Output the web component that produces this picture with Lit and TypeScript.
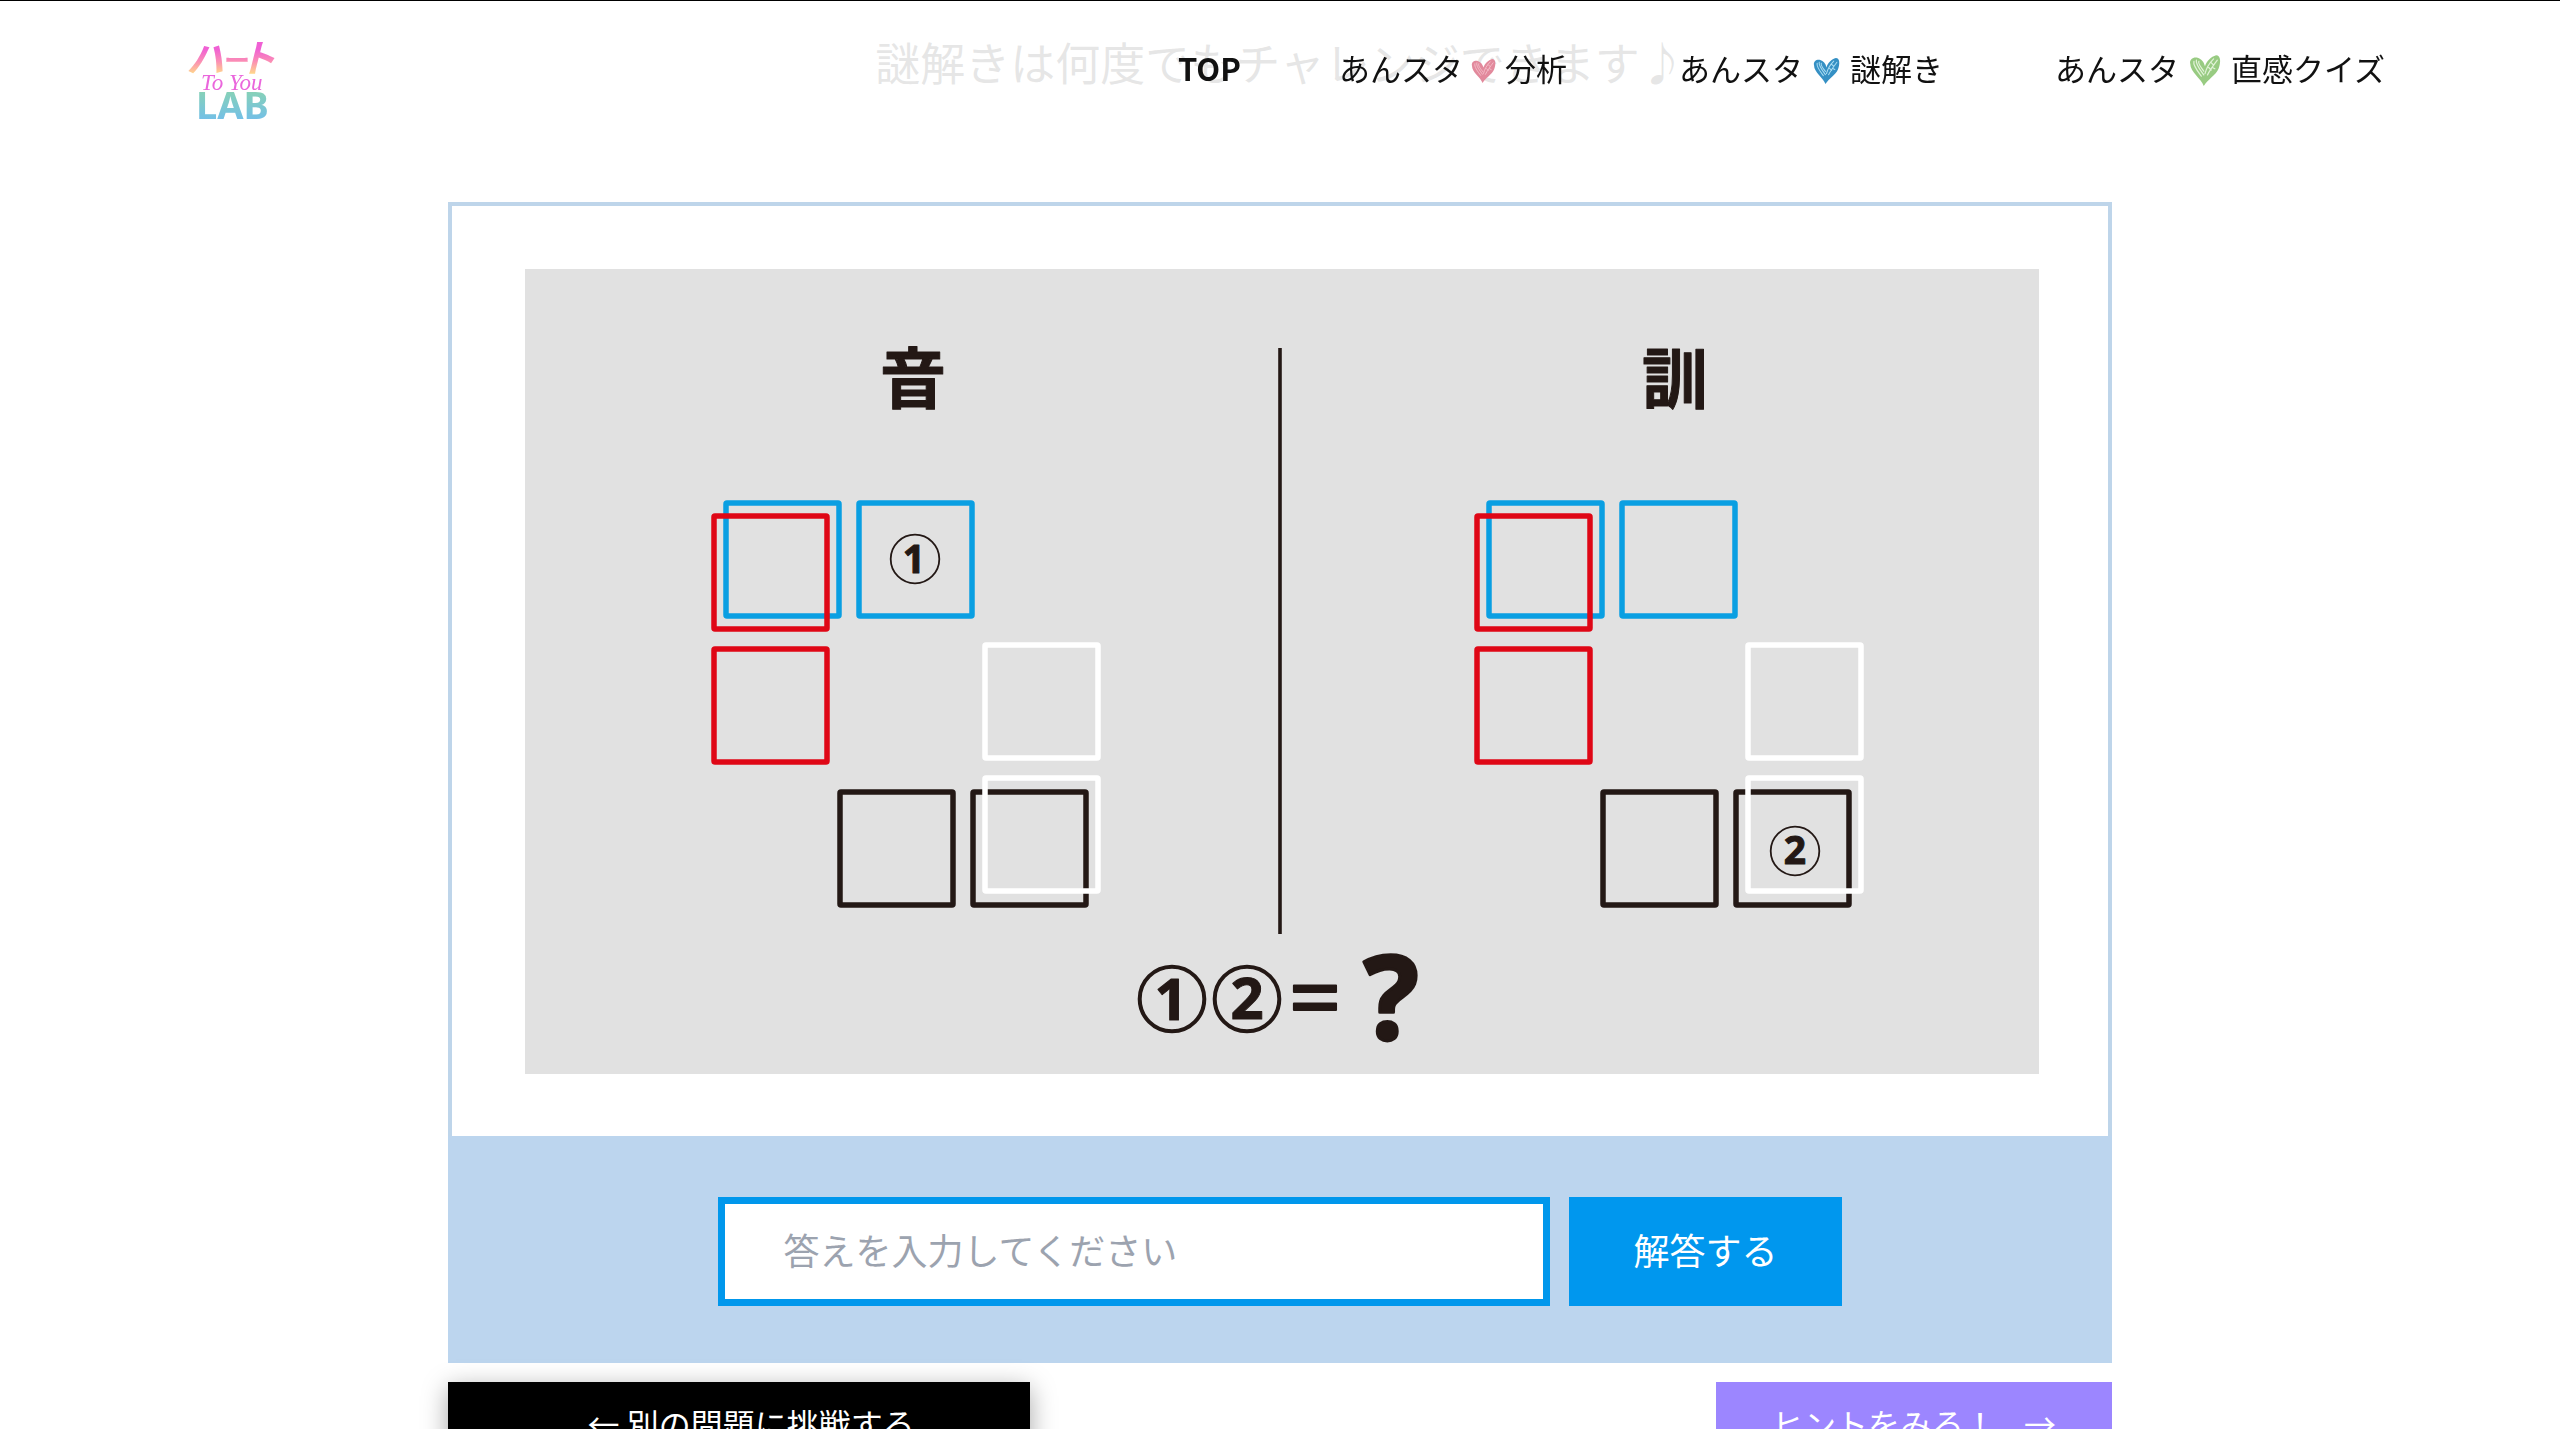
import { LitElement, html, svg, css } from "lit";
import { customElement, property, state } from "lit/decorators.js";

const HEART = {
  outline: "M12 26 C10 20 1 15 1 8 C0 4 4 2 7 3 C10 4 12 6 13 10 C14 6 18 2 22 1 C26 1 26 7 24 12 C22 17 15 21 12 26 Z",
  hatch:
    "M4 6 C3 9 7 14 10 18 M6 5 C5 8 9 13 12 17 M8 6 C7 8 10 11 12 14 M20 4 C16 8 14 12 13 16 M23 5 C20 9 17 13 15 17 M18 7 L20 9 M16 11 L18 13 M19 11 L21 12",
};

@customElement("sketch-heart")
export class SketchHeart extends LitElement {
  static styles = css`
    :host { display: inline-flex; justify-content: center; }
    svg { display: block; height: auto; overflow: visible; }
  `;
  @property() color = "#e2899c";
  @property() line = "#f3bcc8";
  @property({ type: Number }) size = 25;

  render() {
    return html`<svg width=${this.size} viewBox="0 0 26 27" aria-hidden="true">
      <path d=${HEART.outline} fill=${this.color}></path>
      <path d=${HEART.hatch} fill="none" stroke=${this.line} stroke-width="1" stroke-linecap="round"></path>
    </svg>`;
  }
}

@customElement("site-logo")
export class SiteLogo extends LitElement {
  static styles = css`
    :host { display: block; }
    svg { display: block; overflow: visible; }
    .kana { font: italic 700 38px "Noto Sans CJK JP", sans-serif; }
    .dash { font: 700 26px "Noto Sans CJK JP", sans-serif; }
    .script { font: italic 400 23px "Liberation Serif", serif; }
    .lab { font: 700 38px "Noto Sans", sans-serif; }
  `;
  render() {
    return html`<svg width="88" height="84" viewBox="0 0 88 84" role="img" aria-label="ハート To You LAB">
      <defs>
        <linearGradient id="kana" gradientUnits="userSpaceOnUse" x1="0" y1="4" x2="0" y2="35">
          <stop offset="0.2" stop-color="#f060d4"></stop>
          <stop offset="0.6" stop-color="#fb8fb4"></stop>
          <stop offset="1" stop-color="#ffd98a"></stop>
        </linearGradient>
        <linearGradient id="lab" gradientUnits="userSpaceOnUse" x1="0" y1="53" x2="0" y2="80">
          <stop offset="0" stop-color="#86d1b8"></stop>
          <stop offset="1" stop-color="#74c0e6"></stop>
        </linearGradient>
      </defs>
      <text class="lab" x="10" y="80" fill="url(#lab)">LAB</text>
      <g fill="url(#kana)">
        <text class="kana" x="0" y="34">ハ</text>
        <text class="dash" x="38" y="31">ー</text>
        <text class="kana" x="52" y="33">ト</text>
      </g>
      <text class="script" x="15" y="51" fill="#ea66dc">To You</text>
    </svg>`;
  }
}

type Box = { x: number; y: number; color: string };

const BLUE = "#0a9fe2";
const RED = "#df0716";
const INK = "#231815";
const WHITE = "#ffffff";

const BOXES: Box[] = [
  { x: 201, y: 234, color: BLUE },
  { x: 334, y: 234, color: BLUE },
  { x: 189, y: 247, color: RED },
  { x: 189, y: 380, color: RED },
  { x: 315, y: 523, color: INK },
  { x: 448, y: 523, color: INK },
  { x: 460, y: 376, color: WHITE },
  { x: 460, y: 509, color: WHITE },
];

@customElement("puzzle-figure")
export class PuzzleFigure extends LitElement {
  static styles = css`
    :host { display: block; }
    svg { display: block; width: 100%; height: auto; background: #e1e1e1; }
    text { fill: #231815; stroke: #231815; stroke-linejoin: round; text-anchor: middle; font-weight: 700; }
    .title { font-family: "Noto Sans CJK JP", sans-serif; font-size: 66px; stroke-width: 1px; }
    .digit { font-family: "Noto Sans", sans-serif; font-size: 39px; stroke-width: 1px; }
    .large { font-family: "Noto Sans", sans-serif; font-size: 58px; stroke-width: 1px; }
    .equals { font-family: "Noto Sans", sans-serif; font-size: 92px; font-weight: 400; stroke-width: 2px; }
    .mark { font-family: "Noto Sans", sans-serif; font-size: 116px; stroke-width: 3px; }
  `;

  private group(dx: number) {
    return svg`<g transform=${`translate(${dx} 0)`}>
      ${BOXES.map((b) => svg`<rect x=${b.x} y=${b.y} width="113" height="113" rx="1"
        fill="none" stroke=${b.color} stroke-width="5.5" stroke-linejoin="round"></rect>`)}
    </g>`;
  }

  render() {
    return html`<svg viewBox="0 0 1514 805" role="img" aria-label="音と訓の謎解き問題">
      <text class="title" x="388" y="134">音</text>
      <text class="title" x="1150" y="134">訓</text>
      <line x1="755" y1="79" x2="755" y2="665" stroke=${INK} stroke-width="3.6"></line>
      ${this.group(0)}
      ${this.group(763)}
      <g fill="none" stroke=${INK}>
        <circle cx="390" cy="290" r="24.3" stroke-width="1.8"></circle>
        <circle cx="1270" cy="582" r="24.3" stroke-width="1.8"></circle>
        <circle cx="647" cy="730" r="32.3" stroke-width="4"></circle>
        <circle cx="722" cy="730" r="32.3" stroke-width="4"></circle>
      </g>
      <text class="digit" x="389" y="304">1</text>
      <text class="digit" x="1270" y="595">2</text>
      <text class="large" x="646" y="751">1</text>
      <text class="large" x="722" y="750">2</text>
      <text class="equals" x="790" y="761">=</text>
      <text class="mark" x="866" y="770">?</text>
    </svg>`;
  }
}

@customElement("app-root")
export class AppRoot extends LitElement {
  static styles = css`
    :host {
      display: block;
      height: 100vh;
      overflow: hidden;
      background: #ffffff;
      color: #111111;
      font-family: "Noto Sans CJK JP", sans-serif;
      font-size: 31px;
      line-height: 48px;
    }
    * { box-sizing: border-box; }
    .header {
      position: fixed;
      inset: 0 0 auto 0;
      z-index: 1;
      display: flex;
      justify-content: space-between;
      padding: 38px 175px 6px 186px;
      border-top: 1px solid #000000;
      background: rgba(255, 255, 255, 0.9);
    }
    .nav { display: flex; gap: 98px; padding-top: 5px; align-items: flex-start; }
    .link { display: flex; align-items: center; color: inherit; text-decoration: none; white-space: nowrap; }
    .current { font-weight: 700; }
    .spaced { margin-left: 14px; }
    .heart { width: 42px; padding-top: 6px; }
    .spaced .heart { width: 47px; }
    .last .heart { width: 52px; }
    .main { width: 65%; margin: 0 auto; padding-top: 29px; }
    .lead { margin: 0 0 107px; font-size: 45px; line-height: 66px; color: #000000; text-align: center; white-space: nowrap; }
    .card { border: 4px solid #bed5ea; border-bottom: 0; padding: 63px 69px 62px 73px; }
    .answer {
      display: flex;
      justify-content: center;
      gap: 19px;
      padding: 61px 0 57px;
      background: #bcd5ee;
    }
    .field {
      width: 50%;
      height: 109px;
      padding: 0 58px 6px;
      border: 7px solid #0097ec;
      border-radius: 0;
      background: #ffffff;
      color: #111111;
      font: inherit;
      font-size: 36px;
      outline: 0;
    }
    .field::placeholder { color: #9ca3af; opacity: 1; }
    .submit {
      padding: 0 64px 6px;
      border: 0;
      background: #0097ee;
      color: #ffffff;
      font: inherit;
      font-size: 36px;
    }
    .actions { display: flex; justify-content: space-between; padding-top: 19px; }
    .action {
      display: flex;
      justify-content: center;
      padding: 17px 0 20px;
      color: #ffffff;
      font-size: 32px;
      text-decoration: none;
      white-space: pre;
    }
    .other { width: 35%; padding-left: 24px; background: #000000; box-shadow: 0 6px 24px rgba(0, 0, 0, 0.35); }
    .hint { padding-left: 56px; padding-right: 56px; gap: 28px; background: #9c86ff; }
  `;

  @state() private answer = "";

  private onInput(event: Event) {
    this.answer = (event.target as HTMLInputElement).value;
  }

  render() {
    return html`
      <header class="header">
        <site-logo></site-logo>
        <nav class="nav">
          <a class="link current" href="#top">TOP</a>
          <a class="link" href="#analysis">あんスタ<sketch-heart class="heart"></sketch-heart>分析</a>
          <a class="link spaced" href="#riddle">あんスタ<sketch-heart class="heart" color="#3590c4" line="#a9dcf2" size="27"></sketch-heart>謎解き</a>
          <a class="link spaced last" href="#quiz">あんスタ<sketch-heart class="heart" color="#98cb82" line="#e2f3d8" size="32"></sketch-heart>直感クイズ</a>
        </nav>
      </header>
      <main class="main">
        <p class="lead">謎解きは何度でもチャレンジできます♪</p>
        <div class="card"><puzzle-figure></puzzle-figure></div>
        <form class="answer" @submit=${(e: Event) => e.preventDefault()}>
          <input class="field" type="text" aria-label="答え" placeholder="答えを入力してください"
            .value=${this.answer} @input=${this.onInput} />
          <button class="submit" type="submit">解答する</button>
        </form>
        <div class="actions">
          <a class="action other" href="#others">← 別の問題に挑戦する</a>
          <a class="action hint" href="#hint"><span>ヒントをみる！</span><span>→</span></a>
        </div>
      </main>
    `;
  }
}
